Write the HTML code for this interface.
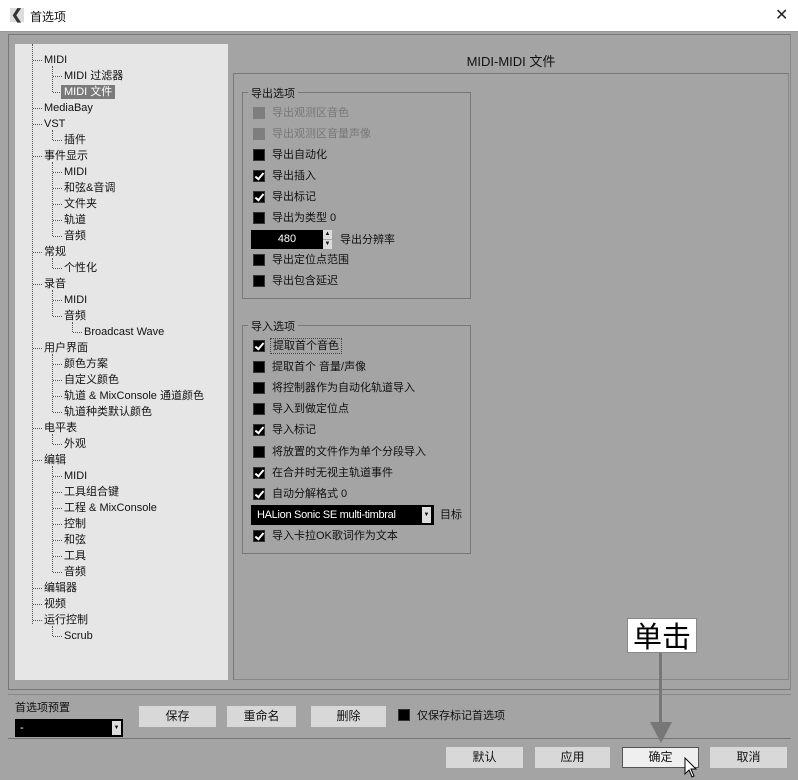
<!DOCTYPE html>
<html><head><meta charset="utf-8"><style>
*{margin:0;padding:0;box-sizing:border-box}
body{width:798px;height:780px;background:#a4a4a4;font-family:"Liberation Sans","Noto Sans CJK SC",sans-serif;font-size:11px;color:#111;position:relative;overflow:hidden}
.a{position:absolute;white-space:nowrap}
.t{position:absolute;white-space:nowrap;line-height:14px;height:14px}
.h{position:absolute;height:0;border-top:1px dotted #555}
.v{position:absolute;width:0;border-left:1px dotted #555}
.cb{position:absolute;width:12px;height:12px;background:#000;border:1px solid #333}
.cb.g{background:#7e7e7e;border-color:#7e7e7e}
.cb.c::after{content:"";position:absolute;left:3px;top:0px;width:3px;height:7px;border:solid #fff;border-width:0 2px 2px 0;transform:rotate(40deg)}
.lb{position:absolute;line-height:14px;font-size:11px;white-space:nowrap}
.btn{position:absolute;background:#d8d8d8;text-align:center;font-size:12px;line-height:20px;height:21px}
</style></head><body>
<!-- title bar -->
<div class="a" style="left:0;top:0;width:798px;height:32px;background:#fff;border-bottom:1px solid #999"></div>
<div class="a" style="left:10px;top:8px;width:14px;height:14px;background:#ddd"></div>
<div class="a" style="left:11px;top:6px;font-size:14px;font-weight:bold;color:#333">&#10094;</div>
<div class="a" style="left:30px;top:8px;font-size:12px">首选项</div>
<div class="a" style="left:775px;top:5px;font-size:16px;color:#222">✕</div>
<!-- frames -->
<div class="a" style="left:8px;top:34px;width:783px;height:656px;border:1px solid #777;border-right-color:#888"></div>
<div class="a" style="left:15px;top:44px;width:213px;height:636px;background:#e6e6e6"></div>
<div class="a" style="left:233px;top:73px;width:556px;height:607px;border:1px solid #777;border-right-color:#888;border-bottom-color:#888"></div>
<div class="a" style="left:233px;top:51px;width:556px;text-align:center;font-size:13px">MIDI-MIDI 文件</div>
<!-- tree -->
<div class="v" style="left:32px;top:44px;height:580px"></div>
<div class="v" style="left:52px;top:66px;height:26px"></div>
<div class="v" style="left:52px;top:130px;height:10px"></div>
<div class="v" style="left:52px;top:162px;height:74px"></div>
<div class="v" style="left:52px;top:258px;height:10px"></div>
<div class="v" style="left:52px;top:290px;height:26px"></div>
<div class="v" style="left:72px;top:322px;height:10px"></div>
<div class="v" style="left:52px;top:354px;height:58px"></div>
<div class="v" style="left:52px;top:434px;height:10px"></div>
<div class="v" style="left:52px;top:466px;height:106px"></div>
<div class="v" style="left:52px;top:626px;height:10px"></div>
<div class="h" style="left:33px;top:60px;width:9px"></div><div class="t" style="left:44px;top:53px">MIDI</div>
<div class="h" style="left:53px;top:76px;width:9px"></div><div class="t" style="left:64px;top:69px">MIDI 过滤器</div>
<div class="h" style="left:53px;top:92px;width:9px"></div><div class="t" style="left:61px;top:85px;background:#7a7a7a;color:#fff;padding:0 3px">MIDI 文件</div>
<div class="h" style="left:33px;top:108px;width:9px"></div><div class="t" style="left:44px;top:101px">MediaBay</div>
<div class="h" style="left:33px;top:124px;width:9px"></div><div class="t" style="left:44px;top:117px">VST</div>
<div class="h" style="left:53px;top:140px;width:9px"></div><div class="t" style="left:64px;top:133px">插件</div>
<div class="h" style="left:33px;top:156px;width:9px"></div><div class="t" style="left:44px;top:149px">事件显示</div>
<div class="h" style="left:53px;top:172px;width:9px"></div><div class="t" style="left:64px;top:165px">MIDI</div>
<div class="h" style="left:53px;top:188px;width:9px"></div><div class="t" style="left:64px;top:181px">和弦&amp;音调</div>
<div class="h" style="left:53px;top:204px;width:9px"></div><div class="t" style="left:64px;top:197px">文件夹</div>
<div class="h" style="left:53px;top:220px;width:9px"></div><div class="t" style="left:64px;top:213px">轨道</div>
<div class="h" style="left:53px;top:236px;width:9px"></div><div class="t" style="left:64px;top:229px">音频</div>
<div class="h" style="left:33px;top:252px;width:9px"></div><div class="t" style="left:44px;top:245px">常规</div>
<div class="h" style="left:53px;top:268px;width:9px"></div><div class="t" style="left:64px;top:261px">个性化</div>
<div class="h" style="left:33px;top:284px;width:9px"></div><div class="t" style="left:44px;top:277px">录音</div>
<div class="h" style="left:53px;top:300px;width:9px"></div><div class="t" style="left:64px;top:293px">MIDI</div>
<div class="h" style="left:53px;top:316px;width:9px"></div><div class="t" style="left:64px;top:309px">音频</div>
<div class="h" style="left:73px;top:332px;width:9px"></div><div class="t" style="left:84px;top:325px">Broadcast Wave</div>
<div class="h" style="left:33px;top:348px;width:9px"></div><div class="t" style="left:44px;top:341px">用户界面</div>
<div class="h" style="left:53px;top:364px;width:9px"></div><div class="t" style="left:64px;top:357px">颜色方案</div>
<div class="h" style="left:53px;top:380px;width:9px"></div><div class="t" style="left:64px;top:373px">自定义颜色</div>
<div class="h" style="left:53px;top:396px;width:9px"></div><div class="t" style="left:64px;top:389px">轨道 &amp; MixConsole 通道颜色</div>
<div class="h" style="left:53px;top:412px;width:9px"></div><div class="t" style="left:64px;top:405px">轨道种类默认颜色</div>
<div class="h" style="left:33px;top:428px;width:9px"></div><div class="t" style="left:44px;top:421px">电平表</div>
<div class="h" style="left:53px;top:444px;width:9px"></div><div class="t" style="left:64px;top:437px">外观</div>
<div class="h" style="left:33px;top:460px;width:9px"></div><div class="t" style="left:44px;top:453px">编辑</div>
<div class="h" style="left:53px;top:476px;width:9px"></div><div class="t" style="left:64px;top:469px">MIDI</div>
<div class="h" style="left:53px;top:492px;width:9px"></div><div class="t" style="left:64px;top:485px">工具组合键</div>
<div class="h" style="left:53px;top:508px;width:9px"></div><div class="t" style="left:64px;top:501px">工程 &amp; MixConsole</div>
<div class="h" style="left:53px;top:524px;width:9px"></div><div class="t" style="left:64px;top:517px">控制</div>
<div class="h" style="left:53px;top:540px;width:9px"></div><div class="t" style="left:64px;top:533px">和弦</div>
<div class="h" style="left:53px;top:556px;width:9px"></div><div class="t" style="left:64px;top:549px">工具</div>
<div class="h" style="left:53px;top:572px;width:9px"></div><div class="t" style="left:64px;top:565px">音频</div>
<div class="h" style="left:33px;top:588px;width:9px"></div><div class="t" style="left:44px;top:581px">编辑器</div>
<div class="h" style="left:33px;top:604px;width:9px"></div><div class="t" style="left:44px;top:597px">视频</div>
<div class="h" style="left:33px;top:620px;width:9px"></div><div class="t" style="left:44px;top:613px">运行控制</div>
<div class="h" style="left:53px;top:636px;width:9px"></div><div class="t" style="left:64px;top:629px">Scrub</div>
<!-- export group -->
<div class="a" style="left:242px;top:92px;width:229px;height:207px;border:1px solid #777"></div>
<div class="a" style="left:248px;top:85px;background:#a4a4a4;padding:0 3px;font-size:11px">导出选项</div>
<div class="cb g" style="left:253px;top:107px"></div><div class="lb" style="left:272px;top:106px;color:#777">导出观测区音色</div>
<div class="cb g" style="left:253px;top:128px"></div><div class="lb" style="left:272px;top:127px;color:#777">导出观测区音量声像</div>
<div class="cb" style="left:253px;top:149px"></div><div class="lb" style="left:272px;top:148px">导出自动化</div>
<div class="cb c" style="left:253px;top:170px"></div><div class="lb" style="left:272px;top:169px">导出插入</div>
<div class="cb c" style="left:253px;top:191px"></div><div class="lb" style="left:272px;top:190px">导出标记</div>
<div class="cb" style="left:253px;top:212px"></div><div class="lb" style="left:272px;top:211px">导出为类型 0</div>
<div class="a" style="left:251px;top:230px;width:72px;height:19px;background:#000;color:#fff;text-align:center;line-height:19px;font-size:11px">480</div>
<div class="a" style="left:323px;top:230px;width:9px;height:9px;background:#ddd;font-size:6px;line-height:9px;text-align:center">▲</div>
<div class="a" style="left:323px;top:240px;width:9px;height:9px;background:#ddd;font-size:6px;line-height:9px;text-align:center">▼</div>
<div class="lb" style="left:340px;top:233px">导出分辨率</div>
<div class="cb" style="left:253px;top:254px"></div><div class="lb" style="left:272px;top:253px">导出定位点范围</div>
<div class="cb" style="left:253px;top:275px"></div><div class="lb" style="left:272px;top:274px">导出包含延迟</div>
<!-- import group -->
<div class="a" style="left:242px;top:325px;width:229px;height:229px;border:1px solid #777"></div>
<div class="a" style="left:248px;top:318px;background:#a4a4a4;padding:0 3px;font-size:11px">导入选项</div>
<div class="cb c" style="left:253px;top:340px"></div><div class="lb" style="left:270px;top:338px;border:1px dotted #444;padding:0 2px">提取首个音色</div>
<div class="cb" style="left:253px;top:361px"></div><div class="lb" style="left:272px;top:360px">提取首个 音量/声像</div>
<div class="cb" style="left:253px;top:382px"></div><div class="lb" style="left:272px;top:381px">将控制器作为自动化轨道导入</div>
<div class="cb" style="left:253px;top:403px"></div><div class="lb" style="left:272px;top:402px">导入到做定位点</div>
<div class="cb c" style="left:253px;top:424px"></div><div class="lb" style="left:272px;top:423px">导入标记</div>
<div class="cb" style="left:253px;top:446px"></div><div class="lb" style="left:272px;top:445px">将放置的文件作为单个分段导入</div>
<div class="cb c" style="left:253px;top:467px"></div><div class="lb" style="left:272px;top:466px">在合并时无视主轨道事件</div>
<div class="cb c" style="left:253px;top:488px"></div><div class="lb" style="left:272px;top:487px">自动分解格式 0</div>
<div class="a" style="left:251px;top:505px;width:183px;height:20px;background:#000;color:#fff;line-height:20px;padding-left:6px;font-size:11px;letter-spacing:-0.3px">HALion Sonic SE multi-timbral</div>
<div class="a" style="left:422px;top:507px;width:9px;height:16px;background:#ddd;font-size:6px;line-height:16px;text-align:center">▼</div>
<div class="lb" style="left:440px;top:508px">目标</div>
<div class="cb c" style="left:253px;top:530px"></div><div class="lb" style="left:272px;top:529px">导入卡拉OK歌词作为文本</div>
<!-- bottom -->
<div class="a" style="left:8px;top:694px;width:783px;height:1px;background:#888"></div>
<div class="a" style="left:8px;top:738px;width:783px;height:1px;background:#777"></div>
<div class="a" style="left:15px;top:699px;font-size:11px">首选项预置</div>
<div class="a" style="left:15px;top:719px;width:108px;height:18px;background:#000;color:#fff;padding-left:5px;line-height:18px">-</div>
<div class="a" style="left:112px;top:721px;width:9px;height:14px;background:#ddd;font-size:6px;line-height:14px;text-align:center">▼</div>
<div class="btn" style="left:139px;top:706px;width:77px">保存</div>
<div class="btn" style="left:227px;top:706px;width:69px">重命名</div>
<div class="btn" style="left:311px;top:706px;width:75px">删除</div>
<div class="cb" style="left:398px;top:709px"></div><div class="lb" style="left:417px;top:709px">仅保存标记首选项</div>
<div class="btn" style="left:446px;top:747px;width:77px">默认</div>
<div class="btn" style="left:535px;top:747px;width:75px">应用</div>
<div class="btn" style="left:622px;top:747px;width:77px;background:#efefef;border:1px solid #555;line-height:19px">确定</div>
<div class="btn" style="left:710px;top:747px;width:77px">取消</div>
<!-- annotation -->
<div class="a" style="left:659px;top:652px;width:3px;height:75px;background:#777"></div>
<svg class="a" style="left:650px;top:722px" width="22" height="22"><polygon points="0,0 22,0 11,21" fill="#777"/></svg>
<div class="a" style="left:627px;top:618px;width:70px;height:35px;background:#fff;border:1px solid #888;font-size:29px;line-height:33px;text-align:center;font-family:'Noto Sans CJK SC',sans-serif;color:#000">单击</div>
<svg class="a" style="left:684px;top:757px" width="14" height="22"><path d="M1,1 L1,17 L5,13 L8,20 L10,19 L7,12 L12,12 Z" fill="#fff" stroke="#000" stroke-width="1"/></svg>
</body></html>
